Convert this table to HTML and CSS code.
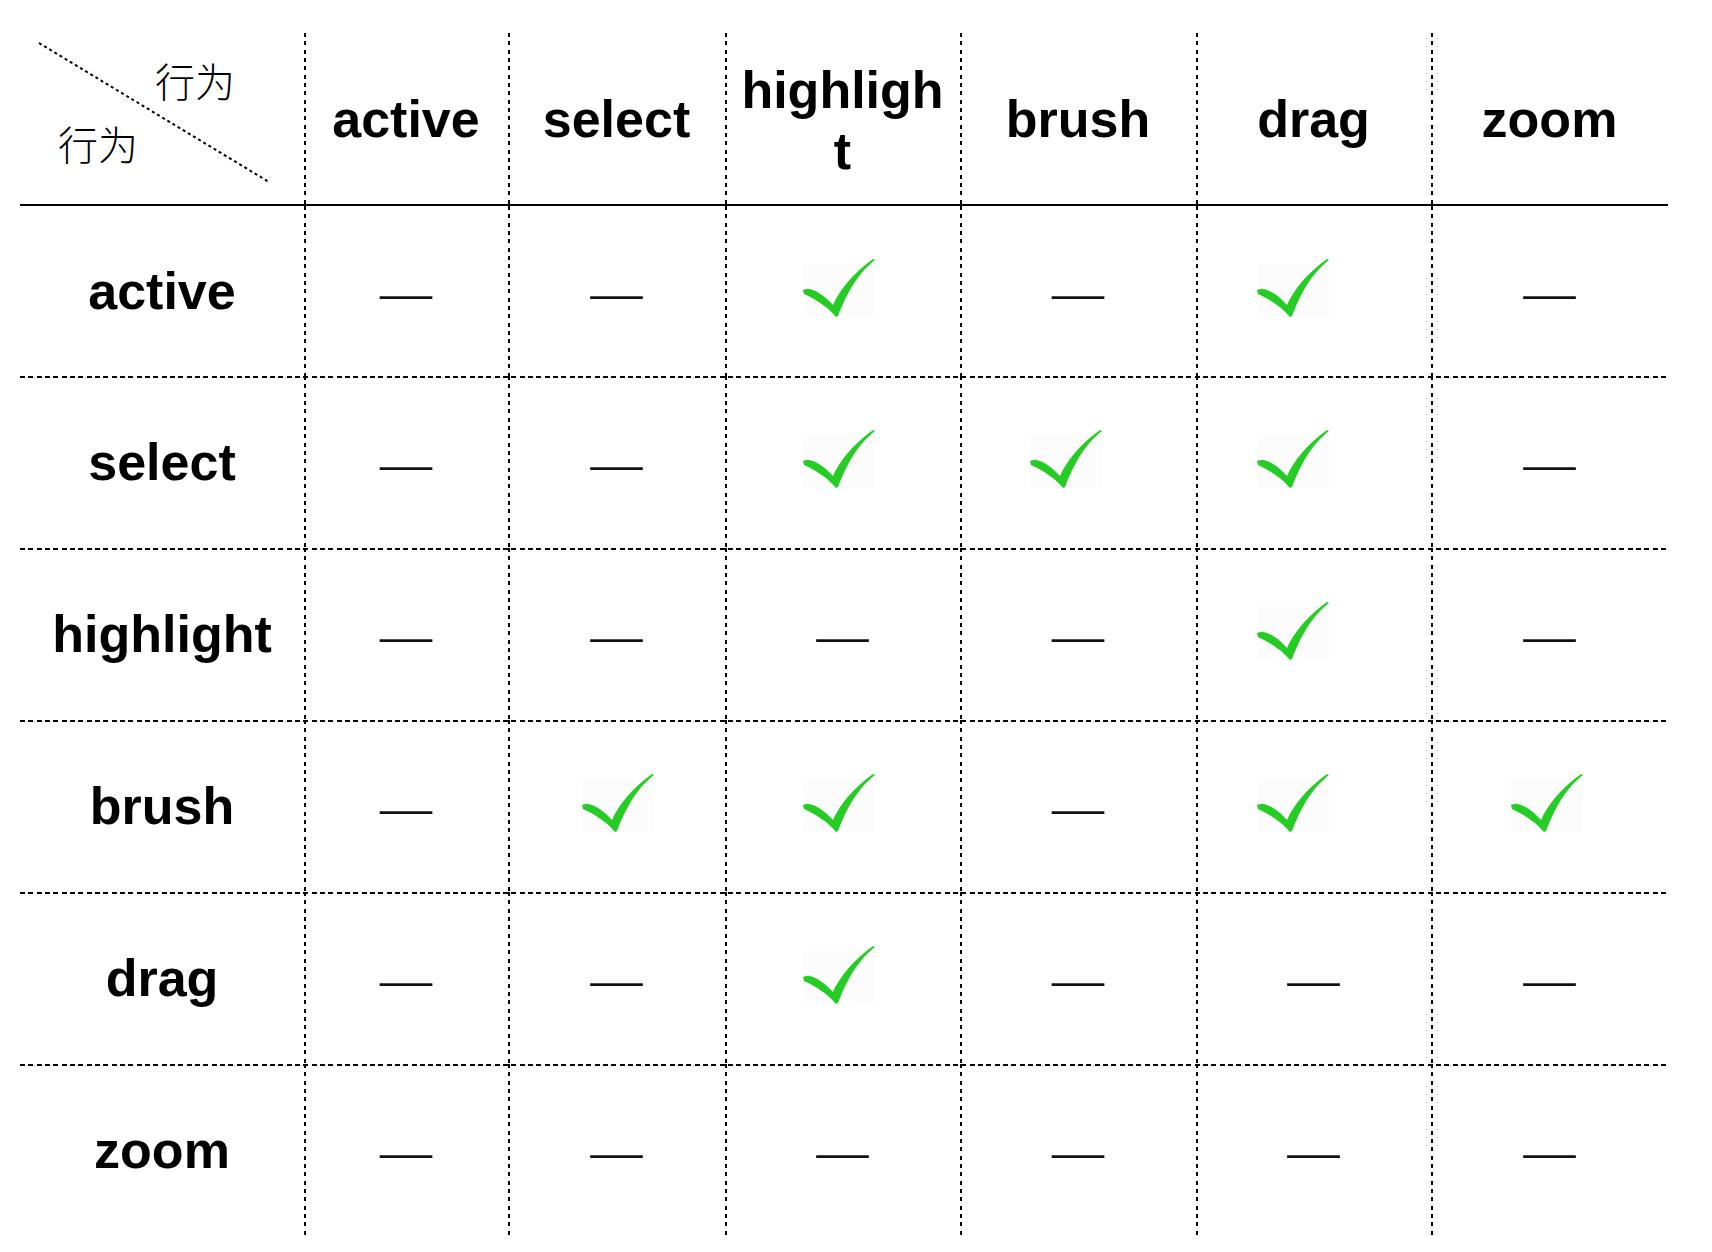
FILE: index.html
```html
<!DOCTYPE html>
<html lang="zh">
<head>
<meta charset="utf-8">
<title>交互行为矩阵</title>
<link rel="stylesheet" href="styles.css">
</head>
<body>
<svg width="0" height="0" class="defs" aria-hidden="true">
  <defs>
    <symbol id="check" viewBox="0 0 72 58">
      <rect x="0" y="5" width="72" height="53" fill="#fcfcfc"/>
      <path d="M0,31 C8,27 20,35 30,46 C36,32 50,14 70,0 L72,1 C58,12 46,28 35,57 L33,58 C26,49 14,41 1,35 Z" fill="#24cc24"/>
    </symbol>
  </defs>
</svg>
<div class="matrix">
  <div class="row head">
    <div class="corner">
      <svg class="diag" viewBox="0 0 284 171" aria-hidden="true"><line x1="19" y1="10" x2="249" y2="149"/></svg>
      <span class="corner-top">行为</span>
      <span class="corner-bottom">行为</span>
    </div>
    <div class="hcell">active</div>
    <div class="hcell">select</div>
    <div class="hcell wrap">highlight</div>
    <div class="hcell">brush</div>
    <div class="hcell">drag</div>
    <div class="hcell">zoom</div>
  </div>

  <div class="row body first">
    <div class="rlabel">active</div>
    <div class="cell"><span class="dash">—</span></div>
    <div class="cell"><span class="dash">—</span></div>
    <div class="cell"><svg class="ck"><use href="#check"/></svg></div>
    <div class="cell"><span class="dash">—</span></div>
    <div class="cell"><svg class="ck"><use href="#check"/></svg></div>
    <div class="cell"><span class="dash">—</span></div>
  </div>

  <div class="row body">
    <div class="rlabel">select</div>
    <div class="cell"><span class="dash">—</span></div>
    <div class="cell"><span class="dash">—</span></div>
    <div class="cell"><svg class="ck"><use href="#check"/></svg></div>
    <div class="cell"><svg class="ck"><use href="#check"/></svg></div>
    <div class="cell"><svg class="ck"><use href="#check"/></svg></div>
    <div class="cell"><span class="dash">—</span></div>
  </div>

  <div class="row body">
    <div class="rlabel">highlight</div>
    <div class="cell"><span class="dash">—</span></div>
    <div class="cell"><span class="dash">—</span></div>
    <div class="cell"><span class="dash">—</span></div>
    <div class="cell"><span class="dash">—</span></div>
    <div class="cell"><svg class="ck"><use href="#check"/></svg></div>
    <div class="cell"><span class="dash">—</span></div>
  </div>

  <div class="row body">
    <div class="rlabel">brush</div>
    <div class="cell"><span class="dash">—</span></div>
    <div class="cell"><svg class="ck"><use href="#check"/></svg></div>
    <div class="cell"><svg class="ck"><use href="#check"/></svg></div>
    <div class="cell"><span class="dash">—</span></div>
    <div class="cell"><svg class="ck"><use href="#check"/></svg></div>
    <div class="cell"><svg class="ck"><use href="#check"/></svg></div>
  </div>

  <div class="row body">
    <div class="rlabel">drag</div>
    <div class="cell"><span class="dash">—</span></div>
    <div class="cell"><span class="dash">—</span></div>
    <div class="cell"><svg class="ck"><use href="#check"/></svg></div>
    <div class="cell"><span class="dash">—</span></div>
    <div class="cell"><span class="dash">—</span></div>
    <div class="cell"><span class="dash">—</span></div>
  </div>

  <div class="row body">
    <div class="rlabel">zoom</div>
    <div class="cell"><span class="dash">—</span></div>
    <div class="cell"><span class="dash">—</span></div>
    <div class="cell"><span class="dash">—</span></div>
    <div class="cell"><span class="dash">—</span></div>
    <div class="cell"><span class="dash">—</span></div>
    <div class="cell"><span class="dash">—</span></div>
  </div>
</div>
</body>
</html>
```

FILE: styles.css
```css
html, body {
  margin: 0;
  padding: 0;
  background: #ffffff;
}

body {
  font-family: "Liberation Sans", Arial, "Noto Sans CJK SC", sans-serif;
  color: #000;
}

.defs {
  position: absolute;
  width: 0;
  height: 0;
}

.matrix {
  width: 1648px;
  margin: 33px 0 0 20px;
}

.row {
  display: grid;
  grid-template-columns: 284px 204px 217px 235px 236px 235px 237px;
  box-sizing: border-box;
}

.head {
  height: 173px;
  border-bottom: 2px solid #000;
}

.body {
  height: 172px;
  background-image: repeating-linear-gradient(to right, #000 0 5px, transparent 5px 8.33px);
  background-size: 100% 2px;
  background-position: left top;
  background-repeat: no-repeat;
}

.body.first {
  height: 170px;
  background-image: none;
}

.row > * + * {
  background-image: repeating-linear-gradient(to bottom, #000 0 4px, transparent 4px 8.33px);
  background-size: 2px 100%;
  background-position: left top;
  background-repeat: no-repeat;
}

/* corner cell */
.corner {
  position: relative;
  display: flex;
  flex-direction: column;
  align-items: flex-start;
  padding-top: 27px;
  font-family: "Noto Sans CJK SC", sans-serif;
  font-weight: 300;
  font-size: 40px;
  line-height: 40px;
}

.diag {
  position: absolute;
  left: 0;
  top: 0;
  width: 284px;
  height: 171px;
}

.diag line {
  stroke: #000;
  stroke-width: 2;
  stroke-dasharray: 3 3;
}

.corner-top {
  margin-left: 135px;
}

.corner-bottom {
  margin-left: 38px;
  margin-top: 23px;
}

/* header cells */
.hcell {
  display: flex;
  align-items: center;
  justify-content: center;
  text-align: center;
  font-weight: bold;
  font-size: 52px;
  line-height: 61px;
  padding-top: 2px;
}

.hcell.wrap {
  padding: 4px 12px 0;
  word-break: break-all;
}

/* body cells */
.rlabel {
  display: flex;
  align-items: center;
  justify-content: center;
  font-weight: bold;
  font-size: 52px;
}

.cell {
  display: flex;
  align-items: center;
  justify-content: center;
}

.dash {
  font-family: "Liberation Serif", "Times New Roman", serif;
  font-size: 52px;
  color: #111;
  line-height: normal;
  margin-top: 2px;
}

.ck {
  width: 72px;
  height: 58px;
  margin-bottom: 6px;
  filter: blur(0.5px);
}

.row > :nth-child(3) .ck { margin-left: 3px; }
.row > :nth-child(4) .ck { margin-right: 7px; }
.row > :nth-child(5) .ck { margin-right: 24px; }
.row > :nth-child(6) .ck { margin-right: 42px; }
.row > :nth-child(7) .ck { margin-right: 6px; }
```
